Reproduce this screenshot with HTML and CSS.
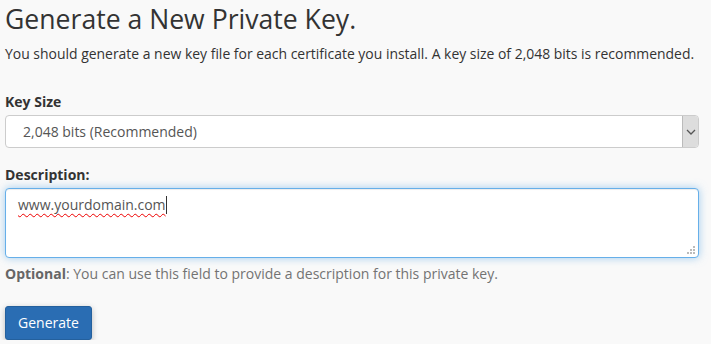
FILE: index.html
```html
<!DOCTYPE html>
<html lang="en">
<head>
  <meta charset="UTF-8" />
  <meta name="viewport" content="width=device-width, initial-scale=1.0" />
  <title>Generate a New Private Key</title>
  <link rel="stylesheet" href="styles.css">
</head>
<body>
  <div class="container">
    <h1 class="title">Generate a New Private Key.</h1>
    <p class="intro">You should generate a new key file for each certificate you install. A key size of 2,048 bits is recommended.</p>

    <form class="key-form">
      <div class="form-group">
        <label for="keySize">Key Size</label>
        <div class="select-wrap">
          <select id="keySize" class="form-control">
            <option>2,048 bits (Recommended)</option>
            <option>4,096 bits</option>
          </select>
          <span class="select-arrow">
            <svg width="10" height="6" viewBox="0 0 10 6"><path d="M1 1l4 4 4-4" fill="none" stroke="#555" stroke-width="1.3"/></svg>
          </span>
        </div>
      </div>

      <div class="form-group">
        <label for="description">Description:</label>
        <div class="textarea-wrap">
          <div class="form-control textarea"><span class="typed">www.yourdomain.com</span><span class="caret"></span></div>
          <svg class="grip" width="8" height="8" viewBox="0 0 8 8">
            <rect x="6" y="0" width="2" height="2" fill="#bbb"/>
            <rect x="3" y="3" width="2" height="2" fill="#bbb"/>
            <rect x="6" y="3" width="2" height="2" fill="#bbb"/>
            <rect x="0" y="6" width="2" height="2" fill="#bbb"/>
            <rect x="3" y="6" width="2" height="2" fill="#bbb"/>
            <rect x="6" y="6" width="2" height="2" fill="#bbb"/>
          </svg>
        </div>
        <p class="help"><strong>Optional</strong>: You can use this field to provide a description for this private key.</p>
      </div>

      <button type="button" class="btn-primary">Generate</button>
    </form>
  </div>
</body>
</html>
```

FILE: styles.css
```css
* {
  box-sizing: border-box;
  margin: 0;
  padding: 0;
}
body {
  font-family: "Open Sans", Arial, sans-serif;
  background-color: #f9f9f9;
  color: #333;
  font-size: 14px;
}
.container {
  padding: 0 12px 0 5px;
}
.title {
  font-size: 26.6px;
  font-weight: 400;
  line-height: 38px;
  margin-top: 0;
}
.intro {
  font-size: 13.95px;
  line-height: 20px;
  margin-top: 6px;
}
.key-form {
  margin-top: 28px;
}
.form-group {
  margin-bottom: 17px;
}
.form-group label {
  display: block;
  font-weight: 700;
  line-height: 20px;
  margin-bottom: 3px;
}
.form-control {
  display: block;
  width: 100%;
  font-family: inherit;
  font-size: 14px;
  color: #555;
  background: #fff;
  border: 1px solid #ccc;
  border-radius: 4px;
}
.select-wrap {
  position: relative;
}
select.form-control {
  appearance: none;
  height: 33px;
  padding: 0 30px 0 17px;
}
.select-arrow {
  position: absolute;
  top: 1px;
  right: 1px;
  width: 16px;
  height: 31px;
  background: #ddd;
  border-left: 1px solid #bbb;
  border-radius: 0 3px 3px 0;
  display: flex;
  align-items: center;
  justify-content: center;
}
.textarea-wrap {
  position: relative;
}
.textarea {
  height: 70px;
  padding: 6px 12px;
  line-height: 20px;
  border-color: #66afe9;
  box-shadow: inset 0 1px 1px rgba(0, 0, 0, 0.075), 0 0 8px rgba(102, 175, 233, 0.6);
}
.typed {
  text-decoration: underline wavy #e00;
  text-decoration-thickness: 1px;
  text-underline-offset: 3px;
}
.caret {
  display: inline-block;
  width: 1px;
  height: 18px;
  background: #333;
  vertical-align: -4px;
}
.grip {
  position: absolute;
  right: 4px;
  bottom: 4px;
}
.help {
  color: #737373;
  line-height: 20px;
  margin-top: 6px;
}
.help strong {
  color: #666;
}
.btn-primary {
  font-family: inherit;
  font-size: 14px;
  color: #fff;
  background-color: #2a6db3;
  border: 1px solid #24609d;
  border-radius: 3px;
  padding: 7px 12px;
  line-height: 18px;
  margin-top: 5px;
  box-shadow: 0 2px 6px rgba(0, 0, 0, 0.25);
  cursor: pointer;
}
```
